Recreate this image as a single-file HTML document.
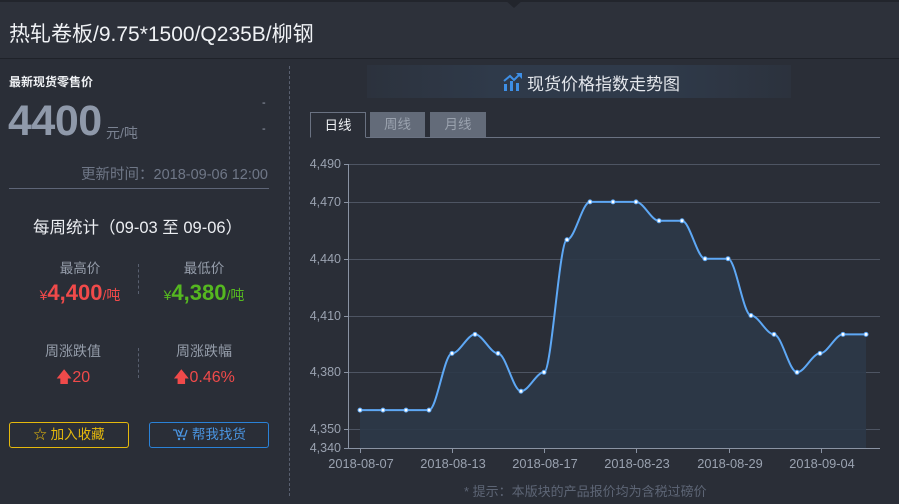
<!DOCTYPE html>
<html><head><meta charset="utf-8"><style>
*{margin:0;padding:0;box-sizing:border-box}
body{width:899px;height:504px;background:#2a2e37;font-family:"Liberation Sans","Noto Sans CJK SC",sans-serif;position:relative;overflow:hidden;color:#e6e8ec}
.a{position:absolute;white-space:nowrap}
.hdr{position:absolute;left:0;top:0;width:899px;height:59px;background:#2d313a;border-top:2px solid #22252c;border-bottom:1px solid #1f2229}
.c{text-align:center}
</style></head><body>
<div class="hdr"></div>
<div class="a" style="left:505px;top:0;width:0;height:0;border-left:9px solid transparent;border-right:9px solid transparent;border-top:8px solid #22252c"></div>
<div class="a" style="left:9px;top:18px;font-size:21px;color:#f0f2f5">热轧卷板/9.75*1500/Q235B/柳钢</div>

<div class="a" style="left:289px;top:66px;height:430px;border-left:1px dashed #596070"></div>

<div class="a" style="left:9px;top:73px;font-size:12px;font-weight:bold;color:#eef0f3">最新现货零售价</div>
<div class="a" style="left:8px;top:97px;font-size:43px;font-weight:bold;color:#8f99aa;letter-spacing:-0.5px">4400</div>
<div class="a" style="left:106px;top:123px;font-size:14px;color:#7b8392">元/吨</div>
<div class="a" style="left:262px;top:97px;font-size:11px;color:#9aa2b0">-</div>
<div class="a" style="left:262px;top:123px;font-size:11px;color:#9aa2b0">-</div>
<div class="a" style="left:60px;top:163px;width:208px;text-align:right;font-size:14.5px;color:#6f7787">更新时间：2018-09-06 12:00</div>
<div class="a" style="left:9px;top:188px;width:260px;border-top:1px solid #5e6577"></div>

<div class="a" style="left:33px;top:214px;font-size:16.5px;color:#eceef2">每周统计（09-03 至 09-06）</div>
<div class="a c" style="left:20px;top:257px;width:120px;font-size:13.5px;color:#959daa">最高价</div>
<div class="a c" style="left:144px;top:257px;width:120px;font-size:13.5px;color:#959daa">最低价</div>
<div class="a c" style="left:20px;top:280px;width:120px;color:#f04a4a"><span style="font-size:14px">¥</span><b style="font-size:22px">4,400</b><span style="font-size:14px">/吨</span></div>
<div class="a c" style="left:144px;top:280px;width:120px;color:#55b820"><span style="font-size:14px">¥</span><b style="font-size:22px">4,380</b><span style="font-size:14px">/吨</span></div>
<div class="a" style="left:138px;top:264px;height:30px;border-left:1px dashed #596070"></div>
<div class="a c" style="left:13px;top:341px;width:120px;font-size:14px;color:#959daa">周涨跌值</div>
<div class="a c" style="left:144px;top:341px;width:120px;font-size:14px;color:#959daa">周涨跌幅</div>
<div class="a c" style="left:13px;top:366px;width:120px;font-size:16px;color:#f04a4a">🡅20</div>
<div class="a c" style="left:144px;top:366px;width:120px;font-size:16px;color:#f04a4a">🡅0.46%</div>
<div class="a" style="left:138px;top:348px;height:30px;border-left:1px dashed #596070"></div>

<div class="a c" style="left:9px;top:422px;width:120px;height:26px;border:1px solid #e5b90d;border-radius:3px;font-size:13.5px;line-height:24px;color:#e5b90d">☆ 加入收藏</div>
<div class="a c" style="left:149px;top:422px;width:120px;height:26px;border:1px solid #2a82d8;border-radius:3px;font-size:13.5px;line-height:24px;color:#4a94e0">
<svg width="16" height="14" viewBox="0 0 16 14" style="vertical-align:-2px"><path d="M1 3h3l2 6h7l2-6M6 3l3 4M11 1l-3 8" fill="none" stroke="#4a94e0" stroke-width="1.3"/><circle cx="7" cy="12" r="1.2" fill="#4a94e0"/><circle cx="12" cy="12" r="1.2" fill="#4a94e0"/></svg> 帮我找货</div>

<div class="a" style="left:367px;top:65px;width:424px;height:33px;background:linear-gradient(90deg,#2c323d,#2f3a4a 30%,#2f3a4a 70%,#2c323d)"></div>
<svg class="a" style="left:503px;top:72px" width="20" height="20" viewBox="0 0 20 20"><rect x="1" y="12" width="3" height="7" fill="#3e8fe6"/><rect x="7" y="9" width="3" height="10" fill="#3e8fe6"/><rect x="13" y="11" width="3" height="8" fill="#3e8fe6"/><path d="M1 9l6-5 4 4 6-6" fill="none" stroke="#3e8fe6" stroke-width="2"/><path d="M13 1h6v6z" fill="#3e8fe6"/></svg>
<div class="a" style="left:527px;top:70px;font-size:17px;color:#e4e7ec">现货价格指数走势图</div>

<div class="a" style="left:310px;top:137px;width:570px;border-top:1px solid #6a7282"></div>
<div class="a c" style="left:310px;top:112px;width:56px;height:26px;border:1px solid #6a7282;border-bottom:1px solid #2a2e37;background:#2a2e37;font-size:13.5px;line-height:25px;color:#eef0f3">日线</div>
<div class="a c" style="left:370px;top:112px;width:55px;height:25px;background:#636b79;font-size:13.5px;line-height:25px;color:#9aa2ae">周线</div>
<div class="a c" style="left:430px;top:112px;width:56px;height:25px;background:#636b79;font-size:13.5px;line-height:25px;color:#9aa2ae">月线</div>

<svg class="a" style="left:0;top:0" width="899" height="504">
<g stroke="#4e5563" stroke-width="1">
<line x1="348" y1="164.5" x2="880" y2="164.5"/><line x1="348" y1="202.5" x2="880" y2="202.5"/><line x1="348" y1="259.5" x2="880" y2="259.5"/><line x1="348" y1="316.5" x2="880" y2="316.5"/><line x1="348" y1="372.5" x2="880" y2="372.5"/><line x1="348" y1="429.5" x2="880" y2="429.5"/>
</g>
<path d="M360 410.1C367.7 410.1 375.3 410.1 383 410.1C390.7 410.1 398.3 410.1 406 410.1C413.7 410.1 421.3 410.1 429 410.1C436.7 410.1 444.3 353.4 452 353.4C459.7 353.4 467.3 334.4 475 334.4C482.7 334.4 490.3 353.4 498 353.4C505.7 353.4 513.3 391.2 521 391.2C528.7 391.2 536.3 372.3 544 372.3C551.7 372.3 559.3 239.8 567 239.8C574.7 239.8 582.3 201.9 590 201.9C597.7 201.9 605.3 201.9 613 201.9C620.7 201.9 628.3 201.9 636 201.9C643.7 201.9 651.3 220.8 659 220.8C666.7 220.8 674.3 220.8 682 220.8C689.7 220.8 697.3 258.7 705 258.7C712.7 258.7 720.3 258.7 728 258.7C735.7 258.7 743.3 315.5 751 315.5C758.7 315.5 766.3 334.4 774 334.4C781.7 334.4 789.3 372.3 797 372.3C804.7 372.3 812.3 353.4 820 353.4C827.7 353.4 835.3 334.4 843 334.4C850.7 334.4 858.3 334.4 866 334.4L866 448L360 448Z" fill="#2c3848" opacity="0.9"/>
<path d="M360 410.1C367.7 410.1 375.3 410.1 383 410.1C390.7 410.1 398.3 410.1 406 410.1C413.7 410.1 421.3 410.1 429 410.1C436.7 410.1 444.3 353.4 452 353.4C459.7 353.4 467.3 334.4 475 334.4C482.7 334.4 490.3 353.4 498 353.4C505.7 353.4 513.3 391.2 521 391.2C528.7 391.2 536.3 372.3 544 372.3C551.7 372.3 559.3 239.8 567 239.8C574.7 239.8 582.3 201.9 590 201.9C597.7 201.9 605.3 201.9 613 201.9C620.7 201.9 628.3 201.9 636 201.9C643.7 201.9 651.3 220.8 659 220.8C666.7 220.8 674.3 220.8 682 220.8C689.7 220.8 697.3 258.7 705 258.7C712.7 258.7 720.3 258.7 728 258.7C735.7 258.7 743.3 315.5 751 315.5C758.7 315.5 766.3 334.4 774 334.4C781.7 334.4 789.3 372.3 797 372.3C804.7 372.3 812.3 353.4 820 353.4C827.7 353.4 835.3 334.4 843 334.4C850.7 334.4 858.3 334.4 866 334.4" fill="none" stroke="#5ea8f5" stroke-width="2"/>
<g fill="#fff" stroke="#5ea8f5" stroke-width="1">
<circle cx="360" cy="410.1" r="2"/><circle cx="383" cy="410.1" r="2"/><circle cx="406" cy="410.1" r="2"/><circle cx="429" cy="410.1" r="2"/><circle cx="452" cy="353.4" r="2"/><circle cx="475" cy="334.4" r="2"/><circle cx="498" cy="353.4" r="2"/><circle cx="521" cy="391.2" r="2"/><circle cx="544" cy="372.3" r="2"/><circle cx="567" cy="239.8" r="2"/><circle cx="590" cy="201.9" r="2"/><circle cx="613" cy="201.9" r="2"/><circle cx="636" cy="201.9" r="2"/><circle cx="659" cy="220.8" r="2"/><circle cx="682" cy="220.8" r="2"/><circle cx="705" cy="258.7" r="2"/><circle cx="728" cy="258.7" r="2"/><circle cx="751" cy="315.5" r="2"/><circle cx="774" cy="334.4" r="2"/><circle cx="797" cy="372.3" r="2"/><circle cx="820" cy="353.4" r="2"/><circle cx="843" cy="334.4" r="2"/><circle cx="866" cy="334.4" r="2"/>
</g>
<g stroke="#8a93a3" stroke-width="1">
<line x1="348.5" y1="164" x2="348.5" y2="448"/><line x1="348" y1="448.5" x2="880" y2="448.5"/>
<line x1="344" y1="164.5" x2="348" y2="164.5"/><line x1="344" y1="202.5" x2="348" y2="202.5"/><line x1="344" y1="259.5" x2="348" y2="259.5"/><line x1="344" y1="316.5" x2="348" y2="316.5"/><line x1="344" y1="372.5" x2="348" y2="372.5"/><line x1="344" y1="429.5" x2="348" y2="429.5"/><line x1="344" y1="448.5" x2="348" y2="448.5"/>
<line x1="360.5" y1="448" x2="360.5" y2="453"/><line x1="452.5" y1="448" x2="452.5" y2="453"/><line x1="544.5" y1="448" x2="544.5" y2="453"/><line x1="636.5" y1="448" x2="636.5" y2="453"/><line x1="729.5" y1="448" x2="729.5" y2="453"/><line x1="821.5" y1="448" x2="821.5" y2="453"/>
</g>
<g font-family="Liberation Sans,sans-serif" font-size="12.5" fill="#9aa2b0" text-anchor="end">
<text x="341" y="168">4,490</text><text x="341" y="206">4,470</text><text x="341" y="263">4,440</text><text x="341" y="320">4,410</text><text x="341" y="376">4,380</text><text x="341" y="433">4,350</text><text x="341" y="452">4,340</text>
</g>
<g font-family="Liberation Sans,sans-serif" font-size="12.8" fill="#9aa2b0" text-anchor="middle">
<text x="361" y="468">2018-08-07</text><text x="453" y="468">2018-08-13</text><text x="545" y="468">2018-08-17</text><text x="637" y="468">2018-08-23</text><text x="730" y="468">2018-08-29</text><text x="822" y="468">2018-09-04</text>
</g>
</svg>
<div class="a" style="left:464px;top:481px;font-size:13px;color:#5d6575">* 提示：本版块的产品报价均为含税过磅价</div>
</body></html>
